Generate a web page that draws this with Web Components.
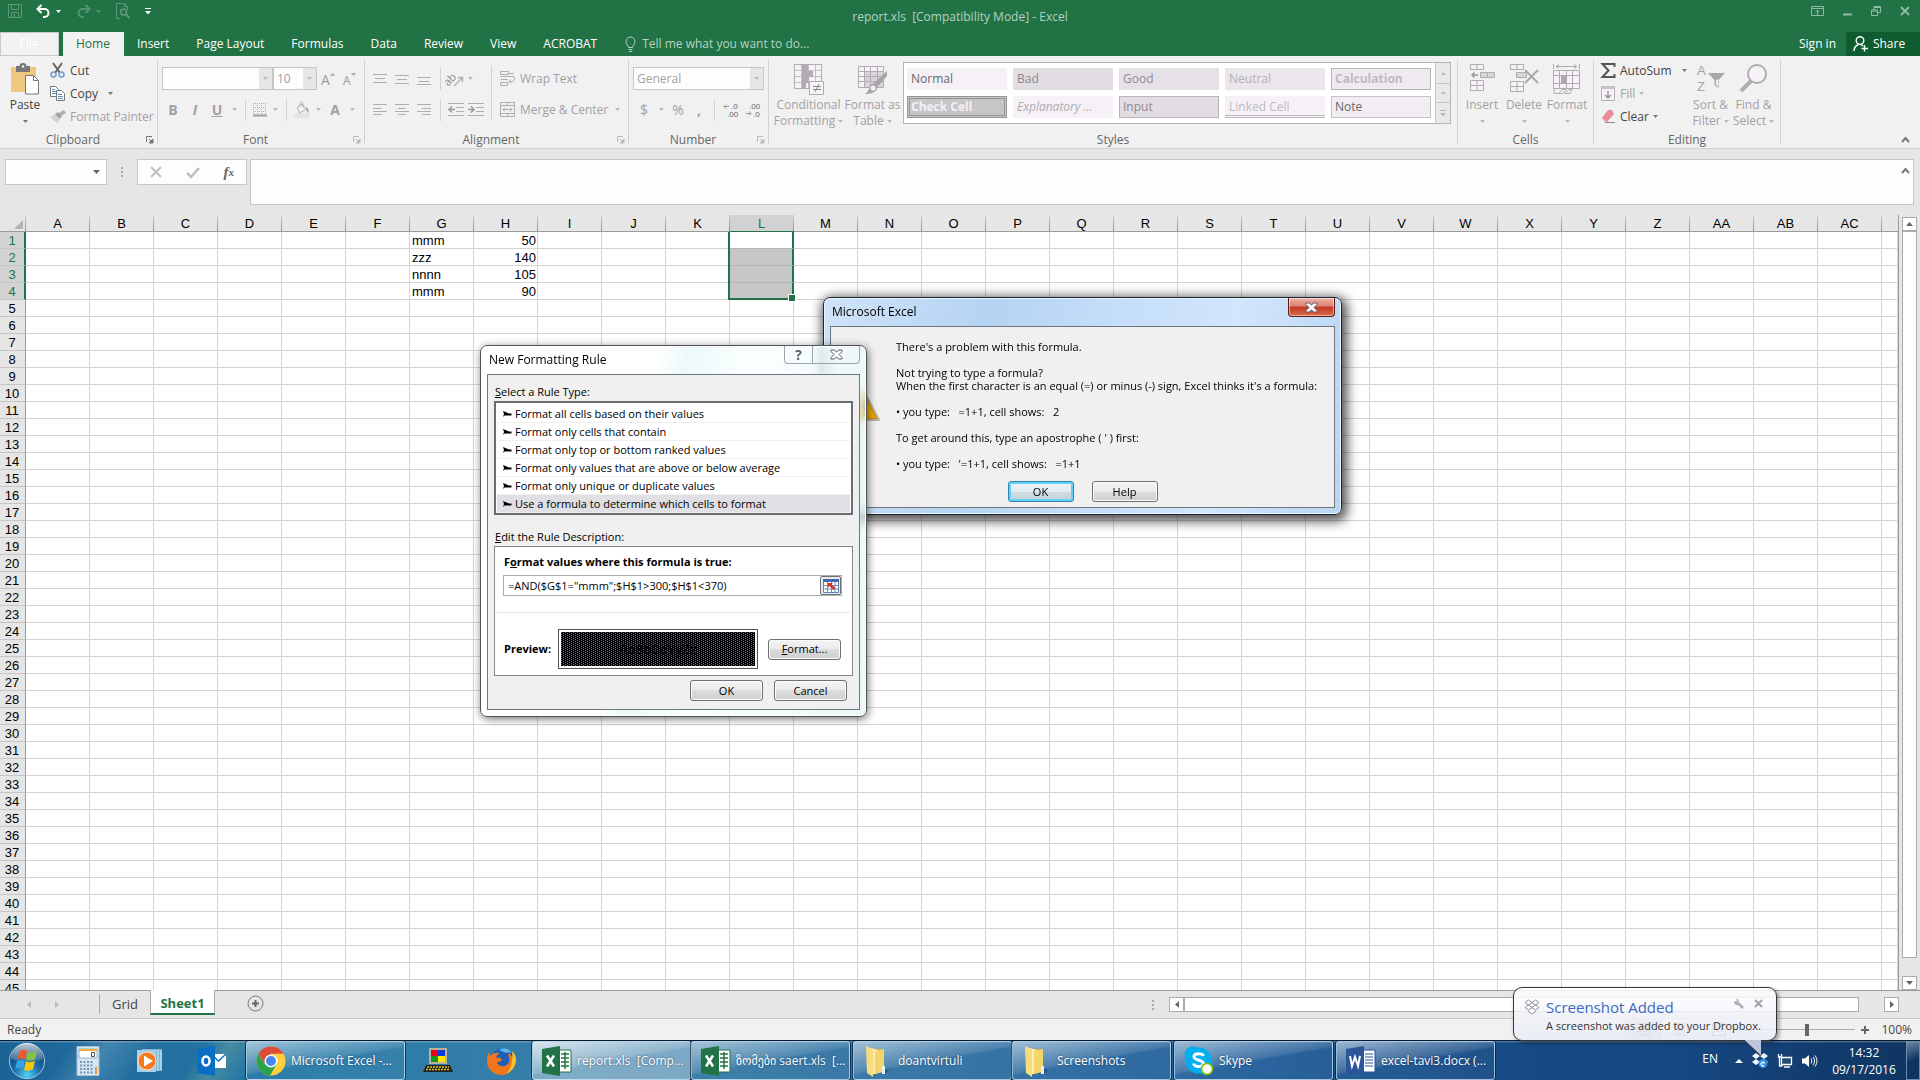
<!DOCTYPE html>
<html lang="en">
<head>
<meta charset="utf-8">
<title>report.xls [Compatibility Mode] - Excel</title>
<style>
  html, body {
    margin: 0;
    height: 100%;
    overflow: hidden;
  }

  body {
    font: 12px/16px "Open Sans", "Noto Sans", "DejaVu Sans", sans-serif;
    color: #444;
    background: #e6e6e6;
  }
</style>
</head>
<body>
<desktop-shell></desktop-shell>

<script>
// ============ ICONS ============
// name: [width, height, svg content]

const G = '#b0acb1';

const ICONS = {
  save: [14, 14, '<path d="M.5.5h13v13H.5zM3.5.5v5h7v-5M3.5 13.5v-5h7v5M6.500 13v-3" fill="none" stroke="#5f9a78"/>'],
  undo: [15, 14, '<path d="M5.500 1 1.500 5l4 4M2 5h6.500a4 4 0 0 1 0 8H7" fill="none" stroke="#fff" stroke-width="2"/>'],
  redo: [15, 14, '<path d="M9.500 1l4 4-4 4M13 5H6.500a4 4 0 0 0 0 8H8" fill="none" stroke="#559471" stroke-width="2"/>'],
  preview: [14, 16, '<path d="M4 15.500H.5V.5h8l3 3V7M8.500.5v3h3" fill="none" stroke="#5f9a78"/><circle cx="7.500" cy="9" r="3" fill="none" stroke="#5f9a78" stroke-width="1.500"/><path d="m9.500 11 4 4" stroke="#5f9a78" stroke-width="2"/>'],
  customize: [6, 7, '<path d="M0 .5h6" stroke="#fff"/><path d="M0 3h6L3 6.500z" fill="#fff"/>'],
  ribbonDisplay: [13, 10, '<path d="M.5.5h12v9H.5zM.5 2.500h12M6.500 9V4M4.500 6l2-2 2 2" fill="none" stroke="#90bba2"/>'],
  minimize: [9, 10, '<path d="M0 8.500h9" stroke="#90bba2" stroke-width="2"/>'],
  restore: [10, 10, '<path d="M.5 4h6v5.500h-6zM.5 5h6M3 3.500V.5h6.500v6H7M3 1.500h6" fill="none" stroke="#90bba2"/>'],
  close: [10, 10, '<path d="m1 1 8 8M9 1 1 9" stroke="#90bba2" stroke-width="2"/>'],
  bulb: [11, 16, '<path d="M3.500 11.500c0-2-2.500-3-2.500-6a4.500 4.500 0 0 1 9 0c0 3-2.500 4-2.500 6z" fill="none" stroke="#b4d2c1"/><path d="M3.500 13.500h4M4 15.500h3" stroke="#b4d2c1"/>'],
  person: [15, 16, '<circle cx="7" cy="4.500" r="3.800" fill="none" stroke="#fff" stroke-width="1.400"/><path d="M1 15c0-3.500 2-5.500 4.500-6.500M8 8.500l2 1.500M11.500 9v6.500M8.500 12.500h6.500" fill="none" stroke="#fff" stroke-width="1.400"/>'],
  down: [5, 3, '<path d="M0 0h5L2.500 3z" fill="#777"/>'],
  downOff: [5, 3, '<path d="M0 0h5L2.500 3z" fill="#bbb"/>'],
  launcher: [8, 8, '<path d="M.5 6V.5H6" fill="none" stroke="#777"/><path d="M3 3l3 3M7 3v4H3z" stroke="#777" fill="#777"/>'],
  launcherOff: [8, 8, '<path d="M.5 6V.5H6" fill="none" stroke="#bbb"/><path d="M3 3l3 3M7 3v4H3z" stroke="#bbb" fill="#bbb"/>'],
  paste: [30, 31, '<path d="M1 3h25v25H1z" fill="#edc87e"/><path d="M6 2h3.500a3.500 3 0 0 1 7 0H20v6H6z" fill="#777"/><circle cx="13" cy="2.500" r="1.300" fill="#f1f1f1"/><path d="M15.500 11.500h8l5 5v13.500h-13z" fill="#fff" stroke="#777"/><path d="M23.500 11.500v5h5" fill="none" stroke="#777"/>'],
  cut: [16, 15, '<path d="M3 0l7 10M12 0 5 10" stroke="#666" stroke-width="2"/><circle cx="3.500" cy="11.500" r="2.500" fill="none" stroke="#6e9fcd" stroke-width="1.500"/><circle cx="11.500" cy="11.500" r="2.500" fill="none" stroke="#6e9fcd" stroke-width="1.500"/>'],
  copy: [16, 15, '<path d="M.5.5h5l3 3v7h-8z" fill="#fff" stroke="#777"/><path d="M2 3.500h3M2 5.500h4M2 7.500h4" stroke="#5b8ec5"/><path d="M6.500 4.500h5l3 3v7h-8z" fill="#fff" stroke="#777"/><path d="M8 8.500h4M8 10.500h5M8 12.500h5" stroke="#5b8ec5"/>'],
  painter: [16, 14, '<path d="M0 7l6-3 4 5-3 4z" fill="#d2ced3"/><path d="M5 4l3-2 4 4-2 3z" fill="#a5a1a6"/><path d="M9 3l5-3 2 3-5 3z" fill="#b0acb1"/>'],
  growFont: [14, 14, '<text x="0" y="13" font-size="14" fill="#a09ca1">A</text><path d="M9 4l2.500-3L14 4z" fill="#aaa"/>'],
  shrinkFont: [14, 14, '<text x="0" y="13" font-size="12" fill="#a09ca1">A</text><path d="M8 1h5l-2.500 3z" fill="#aaa"/>'],
  borders: [14, 14, '<path d="M.5 0v12M4.500 0v12M8.500 0v12M12.500 0v12M0 .5h13M0 4.500h13M0 8.500h13" stroke="#b0acb1" stroke-dasharray="1 1"/><path d="M0 12.500h14" stroke="#a19da2" stroke-width="2"/>'],
  bucket: [16, 16, '<path d="M0 11h16v5H0z" fill="#e9e2ea"/><path d="M3 6l5-4 4 5-6 4z" fill="#f6f2f7" stroke="#b0acb1"/><path d="M6 5V1.500a1.500 1.500 0 0 1 3 0V6" fill="none" stroke="#b0acb1"/><path d="M12 5c3 2 3 4 2 6-1-1-2-3-2-6z" fill="#a5a1a6"/>'],
  alignTop: [14, 12, `<path d="M0 1.500h14M2 5.500h10M0 9.500h14" stroke="${G}"/>`],
  alignMiddle: [14, 12, `<path d="M0 2.500h14M2 6.500h10M0 10.500h14" stroke="${G}"/>`],
  alignBottom: [14, 12, `<path d="M0 4.500h14M2 8.500h10M0 11.500h14" stroke="${G}"/>`],
  alignLeft: [14, 12, `<path d="M0 .5h14M0 4.500h9M0 7.500h14M0 10.500h9" stroke="${G}"/>`],
  alignCenter: [14, 12, `<path d="M0 .5h14M3 4.500h8M0 7.500h14M3 10.500h8" stroke="${G}"/>`],
  alignRight: [14, 12, `<path d="M0 .5h14M5 4.500h9M0 7.500h14M5 10.500h9" stroke="${G}"/>`],
  orient: [17, 16, `<text x="-3" y="10" font-size="11" fill="#888" transform="rotate(-45 6 8)">ab</text><path d="M7 15 15 7M11 6.500h4.500V11" fill="none" stroke="${G}" stroke-width="1.300"/>`],
  outdent: [16, 13, `<path d="M0 .5h16M8 4.500h8M8 8.500h8M0 12.500h16" stroke="${G}"/><path d="M1 6.500h6M4 3.500l-3 3 3 3" fill="none" stroke="#999" stroke-width="1.500"/>`],
  indent: [16, 13, `<path d="M0 .5h16M8 4.500h8M8 8.500h8M0 12.500h16" stroke="${G}"/><path d="M0 6.500h6M3 3.500l3 3-3 3" fill="none" stroke="#999" stroke-width="1.500"/>`],
  wrap: [16, 15, `<path d="M.5.5h8v3h-8zM.5 5.500H14M.5 8.500h7M.5 11.500h7v3h-7zM13.500 5.500c2 2 1 5-2 5H9M11 8.500l-2 2 2 2" fill="none" stroke="${G}"/><path d="M9 2.500h5" stroke="${G}"/>`],
  merge: [16, 15, `<path d="M.5.5h14v14H.5zM.5 3.500h14M.5 11.500h14M7.500.5v3M7.500 11.500v3M3 7.500h9M5 5.500l-2 2 2 2M10 5.500l2 2-2 2" fill="none" stroke="${G}"/>`],
  decInc: [16, 14, '<path d="M6 3.500H1M3 1.500l-2 2 2 2" fill="none" stroke="#999"/><g font-size="8" fill="#666" style="font-family:Liberation Sans"><text x="8" y="6">.0</text><text x="4" y="14">.00</text></g>'],
  decDec: [16, 14, '<path d="M1 10.500h5M4 8.500l2 2-2 2" fill="none" stroke="#999"/><g font-size="8" fill="#666" style="font-family:Liberation Sans"><text x="4" y="6">.00</text><text x="8" y="14">.0</text></g>'],
  condFormat: [30, 31, `<path d="M.5.5h27v24H.5z" fill="#f6f2f7" stroke="${G}"/><path d="M8 1h6v6H8zM8 7h11v6H8zM8 13h7v6H8zM8 19h4v6H8z" fill="#b0acb1"/><path d="M.5 6.500h27M.5 12.500h27M.5 18.500h27M7.500.5v24M14.500.5v24M21.500.5v24" stroke="${G}" opacity=".7"/><path d="M15.500 17.500h14v13h-14z" fill="#f8f5f9" stroke="${G}"/><path d="M19 22.500h8M19 25.500h8M25 20l-4 8" stroke="#888"/>`],
  tableFormat: [30, 31, `<path d="M.5 2.500h25v21H.5z" fill="#f6f2f7" stroke="${G}"/><path d="M7 8h18v15H7z" fill="#d8d4d9"/><path d="M.5 7.500h25M.5 12.500h25M.5 17.500h25M6.500 2.500v21M12.500 2.500v21M19.500 2.500v21" stroke="${G}"/><path d="M29 7v5l-9 10-4-3z" fill="#a7a3a8"/><path d="M15 19c3 0 5 3 4 6-2 4-7 5-12 5 5-3 3-8 8-11z" fill="#aaa6ab"/><circle cx="15" cy="24" r="2.500" fill="#f1f1f1"/>`],
  insertCells: [26, 30, `<path d="M1.500.5h13v5h-13zM8 .5v5M1.500 16.500h13v10h-13zM8 16.500v10M1.500 21.500h13" fill="#f6f2f7" stroke="${G}"/><path d="M11.500 8.500h14v5h-14zM18.500 8.500v5" fill="#d8d4d9" stroke="${G}"/><path d="M9 11H3M5.500 8.500 3 11l2.500 2.500" fill="none" stroke="#999" stroke-width="1.500"/>`],
  deleteCells: [30, 30, `<path d="M1.500.5h13v5h-13zM8 .5v5M1.500 17.500h13v10h-13zM8 17.500v10M1.500 22.500h13" fill="#f6f2f7" stroke="${G}"/><path d="M7.500 8.500h10v5h-10z" fill="#d8d4d9" stroke="${G}"/><path d="m16 6 13 13M29 6 16 19" stroke="#aaa" stroke-width="2"/>`],
  formatCells: [30, 32, `<path d="M1.500 0v5M27.500 0v5M4 2.500h21M7 .5l-3 2 3 2M22 .5l3 2-3 2" fill="none" stroke="${G}"/><path d="M1.500 6.500h26v18h-26z" fill="#f6f2f7" stroke="${G}"/><path d="M1.500 11.500h26M1.500 19.500h26M7.500 6.500v18M14.500 6.500v18M20.500 6.500v18" stroke="${G}"/><path d="M9 12h6v8H9z" fill="#aaa"/><path d="M2 25v4.500h5l3-4h4l-3 4h-4M13 29.500l4-4h3l-2 4z" fill="none" stroke="${G}"/>`],
  sigma: [15, 15, '<path d="M13.500 4V1H1.500l6 6.500-6 6.500h12v-3" fill="none" stroke="#555" stroke-width="2"/>'],
  fill: [15, 15, `<path d="M.5.5h13v14H.5z" fill="#f6f2f7" stroke="${G}"/><path d="M0 0h14v3H0z" fill="#c5c1c6"/><path d="M7 5v7M4 9l3 3 3-3" fill="none" stroke="#999" stroke-width="1.500"/>`],
  eraser: [15, 14, '<path d="M7 0h4l2 4-7 8H3L1 8z" fill="#e98b9b"/><path d="M1 8l5 4H3z" fill="#f5c9d0"/><path d="M4 12.500h10" stroke="#888"/>'],
  sort: [30, 30, '<g font-size="13" fill="#a5a1a6" style="font-family:Liberation Sans"><text x="1" y="11">A</text><text x="1" y="27">Z</text></g><path d="M12 9h17l-6.500 7v8l-4-3v-5z" fill="#aaa6ab"/><path d="M20 16v5l2 1v-7z" fill="#eee"/>'],
  find: [30, 30, '<circle cx="18" cy="10" r="9" fill="#f6f2f7" stroke="#b0acb1" stroke-width="2"/><path d="M12 17 2 27" stroke="#b0acb1" stroke-width="4"/>'],
  chevronUp: [9, 6, '<path d="M1 5l3.500-4L8 5" fill="none" stroke="#777" stroke-width="2"/>'],
  cancel: [12, 10, '<path d="m1 0 10 10M11 0 1 10" stroke="#c0c0c0" stroke-width="2"/>'],
  check: [14, 11, '<path d="M1 6l4 4 8-9" fill="none" stroke="#c0c0c0" stroke-width="2.500"/>'],
  up: [7, 4, '<path d="M0 4h7L3.500 0z" fill="#666"/>'],
  downBig: [7, 4, '<path d="M0 0h7L3.500 4z" fill="#666"/>'],
  left: [4, 7, '<path d="M4 0v7L0 3.500z" fill="#666"/>'],
  right: [4, 7, '<path d="M0 0v7l4-3.500z" fill="#666"/>'],
  leftOff: [4, 7, '<path d="M4 0v7L0 3.500z" fill="#bcbcbc"/>'],
  rightOff: [4, 7, '<path d="M0 0v7l4-3.500z" fill="#bcbcbc"/>'],
  plusCircle: [17, 17, '<circle cx="8.500" cy="8.500" r="7.500" fill="none" stroke="#777"/><path d="M8.500 5v7M5 8.500h7" stroke="#666" stroke-width="2"/>'],
  viewNormal: [14, 13, '<path d="M.5.5h13v12H.5zM.5 4.500h13M.5 8.500h13M5 .5v12M9.500.5v12" fill="none" stroke="#777"/>'],
  viewLayout: [14, 13, '<path d="M.5.5h13v12H.5zM3.500 2.500h7v8h-7zM5 5h4M5 7.500h4" fill="none" stroke="#777"/>'],
  viewBreak: [14, 13, '<path d="M.5.5h13v12H.5zM4.500.5v8h5v-8" fill="none" stroke="#777"/>'],
  bullet: [9, 6, '<path d="M0 0 6 2.500h2.500v2H1.500L0 6 1 3z" fill="#000"/>'],
  rangePick: [16, 14, '<path d="M.5.5h15v13H.5z" fill="#fff" stroke="#5d7fb0"/><path d="M0 0h16v3H0z" fill="#3e69b0"/><path d="M.5 6.500h15M.5 10h15M4.500 3v11M8.500 3v11M12 3v11" stroke="#6d8fc4"/><path d="M5 4h5l-1.500 1.500 4 3.500-2 2-4-4L5 8.500z" fill="#d8301c"/>'],
  warning: [32, 32, '<path d="M16 2 31 31H1z" fill="#f5b400" stroke="#b7b0a0" stroke-linejoin="round" stroke-width="2"/><path d="M16 5 28.500 29.500h-25z" fill="#ecaa00" stroke="#c98a00"/><path d="M15 12h3v10h-3zM15 24h3v3h-3z" fill="#222"/>'],
  glassClose: [13, 11, '<path d="M1 1h3.500l2 2.200L8.500 1H12v1.500L9 5.500l3 3V10H8.500l-2-2.200L4.500 10H1V8.500l3-3-3-3z" fill="#fff" stroke="#555b6d"/>'],
  orb: [38, 38, '<defs><radialGradient id="o" cx=".5" cy=".9" r=".8"><stop offset="0" stop-color="#4fd2f5"/><stop offset=".45" stop-color="#1d6fae"/><stop offset="1" stop-color="#0f3f6f"/></radialGradient><linearGradient id="h" x2="0" y2="1"><stop offset="0" stop-color="#fff" stop-opacity=".75"/><stop offset="1" stop-color="#fff" stop-opacity=".1"/></linearGradient></defs><circle cx="19" cy="19" r="17.500" fill="url(#o)" stroke="#a9cbe0"/><path d="M3 17a16 16 0 0 1 32 0c-9 4-22 4-32 0z" fill="url(#h)"/><path d="M12 9c3-2 5-1 7 0l-2 8c-3-1-5-1-8 0z" fill="#ef5a28"/><path d="M20 10c3 1 6 1 9-1l-2 8c-3 2-6 2-9 0z" fill="#86c440"/><path d="M9 19c3-1 5-1 8 0l-2 8c-3-2-5-1-8 0z" fill="#37a3e6"/><path d="M18 19c3 2 6 1 9 0l-2 8c-3 2-6 2-9 1z" fill="#fdc60b"/>'],
  calc: [24, 30, '<path d="M1 .5h22v29H1z" fill="#d6e8f4" stroke="#a3c1d6"/><path d="M3 3h18v9H3z" fill="#fff" stroke="#8fb3cb"/><path d="M3 3h18v2H3z" fill="#f3ad3f"/><path d="M15.500 6.500h3v4h-3z" fill="none" stroke="#456"/><path d="M4 16h14M4 19.500h14M4 23h14M4 26.500h14" stroke="#6f97b5" stroke-width="2" stroke-dasharray="2 1.500"/><path d="M19 21h2v7h-2z" fill="#f0952b"/>'],
  media: [28, 26, '<path d="M6 1h20v22H6z" fill="#7fb5d5"/><path d="M1 2h19v22H1z" fill="#a8cfe6"/><path d="M22 2v21M25 3v19" stroke="#d7eaf5"/><circle cx="11" cy="13" r="9" fill="#f4791f" stroke="#fde1c5"/><path d="M8 7.500 17 13l-9 5.500z" fill="#fff"/>'],
  outlook: [30, 30, '<path d="M14 8h15v14H14z" fill="#fff"/><path d="M14 8l7.500 7L29 8M14 22V9" fill="none" stroke="#0c6fc7" stroke-width="1.500"/><path d="M0 3 18 0v30L0 27z" fill="#0b6ec6"/><ellipse cx="9" cy="15" rx="3.500" ry="4.500" fill="none" stroke="#fff" stroke-width="2.500"/>'],
  chrome: [30, 30, '<circle cx="15" cy="15" r="14.500" fill="#fdd13b"/><path d="M2.400 7.700A14.500 14.500 0 0 1 27.600 7.800H15L9 18z" fill="#de4b3c"/><path d="M2.400 7.700A14.500 14.500 0 0 0 14 29.500l6.500-11H9z" fill="#2ba24c"/><circle cx="15" cy="15" r="6.500" fill="#fff"/><circle cx="15" cy="15" r="5" fill="#4687f1"/>'],
  laptop: [30, 26, '<path d="M6 0h18v16H6z" fill="#b9b29a"/><path d="M8 2h7v6H8z" fill="#e8001c"/><path d="M15 2h7v6h-7z" fill="#0a3be0"/><path d="M8 8h7v6H8z" fill="#109c18"/><path d="M15 8h7v6h-7z" fill="#ffe600"/><path d="M3 17h24l3 7H0z" fill="#222"/><path d="M4 19h22M3 21.500h24" stroke="#e6c21c" stroke-width="1.500" stroke-dasharray="2 1"/>'],
  firefox: [30, 30, '<circle cx="16" cy="14" r="12" fill="#1d5fb4"/><path d="M12 4c4-3 10-2 13 3-4-1-6 0-6 0s-4-2-7-3z" fill="#58b6ea"/><path d="M2 6c0 2 .5 3 1.500 4C5 8 8 6 12 7c-1 2-3 3-3 5 3-1 5 0 6 2-1 2-4 1-5 3 3 5 10 4 12-1 1-4-1-7-1-9 4 2 6 6 6 10-1 7-6 12-13 12S0 23 0 16C0 12 0 9 2 6z" fill="#f0761b"/><path d="M25 5c4 4 5 9 3 14-2 5-5 7-9 9 6-6 7-14 6-23z" fill="#fbc02d"/>'],
  excel: [30, 30, '<path d="M17 4h12v22H17z" fill="#fff" stroke="#217346"/><path d="M19 8h8M19 12h8M19 16h8M19 20h8M23 6v17" stroke="#217346" stroke-width="1.500"/><path d="M0 3 18 0v30L0 27z" fill="#217346"/><path d="m5 9.500 7 11M12 9.500l-7 11" stroke="#fff" stroke-width="2.500"/>'],
  word: [30, 30, '<path d="M17 4h12v22H17z" fill="#fff" stroke="#2a5699"/><path d="M19 8h8M19 11h8M19 14h8M19 17h8M19 20h8" stroke="#2a5699"/><path d="M0 3 18 0v30L0 27z" fill="#2a5699"/><path d="M4 10l2 10 3-9 3 9 2-10" fill="none" stroke="#fff" stroke-width="2"/>'],
  folder: [30, 30, '<path d="M6 26 22 28l4-4-8-2z" fill="#1b3b5c" opacity=".5"/><path d="M10 3h9v23h-9z" fill="#d8a83c"/><path d="M8 2l7 2v23l-7 2z" fill="#f9edb0"/><path d="M3 0l7 3v28l-6-4z" fill="#f6dc7c"/><path d="M12 5l9-2v23l-9 2z" fill="#f4d56b"/><path d="M19 20h3v8h-3z" fill="#dff0fb"/>'],
  skype: [30, 30, '<circle cx="9" cy="9" r="8.500" fill="#00aff0"/><circle cx="14.500" cy="14.500" r="13" fill="#00aff0"/><circle cx="20" cy="20" r="8.500" fill="#00aff0"/><path d="M19.500 10c-1-3-9-3.500-9.500.5-.5 4.500 10 3 9.500 7.500-.5 3.500-9 3.500-10-.5" fill="none" stroke="#fff" stroke-width="3"/><circle cx="23" cy="23" r="5.500" fill="#fff" stroke="#7fba00" stroke-width="1.500"/>'],
  trayUp: [8, 4, '<path d="M0 4h8L4 0z" fill="#fff"/>'],
  dropboxTray: [16, 15, '<path d="M4 0l4 3-4 3-4-3zM12 0l4 3-4 3-4-3zM4 6l4 3-4 3-4-3zM12 6l4 3-4 3-4-3z" fill="#f2f6fa"/><circle cx="11" cy="10.500" r="4.500" fill="#2d8fdb"/><path d="M9 10h4M9 12.500h3M13 10a2.200 2.200 0 1 0-1 3" stroke="#fff" fill="none"/>'],
  network: [16, 15, '<path d="M4.500 4.500h10v7h-10zM7 14h6M1.500 1v3h3M2.500 4v9h3M4.500 1v3" fill="#244c74" stroke="#fff" stroke-width="1.300"/>'],
  speaker: [15, 14, '<path d="M0 4.500h3L7 1v12L3 9.500H0z" fill="#fff"/><path d="M9 4.500c1 1.500 1 3.500 0 5M11 3c2 2.500 2 5.500 0 8M13 1.500c2.500 3.500 2.500 7.500 0 11" fill="none" stroke="#fff"/>'],
  dropbox: [16, 16, '<path d="M4.500 1 8 3.500 4.500 6 1 3.500zM11.500 1 15 3.500 11.500 6 8 3.500zM4.500 6 8 8.500 4.500 11 1 8.500zM11.500 6 15 8.500 11.500 11 8 8.500zM4 12l4 3 4-3" fill="#fff" stroke="#8b8f96"/>'],
  wrench: [11, 11, '<path d="M1 3.500a2.500 2.500 0 0 0 3.500 2L9 10" fill="none" stroke="#a9acb2" stroke-width="2.500"/><path d="M3 1l1 2-2 1" fill="none" stroke="#a9acb2" stroke-width="1.500"/>'],
  balloonClose: [9, 9, '<path d="m1 1 7 7M8 1 1 8" stroke="#a0a3a9" stroke-width="2"/>']
};

// ============ BASE ============

const BASE_CSS = `
  * { box-sizing: border-box; }
  button, input, select, textarea {
    margin: 0;
    padding: 0;
    border: 0;
    border-radius: 0;
    background: none;
    font: inherit;
    color: inherit;
    outline: none;
    appearance: none;
  }
  button {
    display: inline-flex;
    align-items: center;
    justify-content: center;
    white-space: nowrap;
  }
`;

class BaseElement extends HTMLElement {
  constructor() {
    super();
    this.attachShadow({ mode: 'open' });
  }

  connectedCallback() {
    this.shadowRoot.innerHTML = `
      <style>${BASE_CSS}${this._getStyles()}</style>
      ${this._getTemplate()}
    `;
  }

  _getStyles() {
    return ':host { display: block; }';
  }

  _getTemplate() {
    return '<slot></slot>';
  }
}

const icon = name => `<ui-icon name="${name}"></ui-icon>`;

class UiIcon extends BaseElement {
  _getStyles() {
    return `
      :host { display: inline-flex; flex: none; }
      svg { display: block; overflow: visible; }
      text { font-family: "Open Sans", sans-serif; }
      g text { font-family: inherit; }
    `;
  }

  _getTemplate() {
    const [width, height, content] = ICONS[this.getAttribute('name')];
    return `<svg width="${width}" height="${height}" viewBox="0 0 ${width} ${height}" aria-hidden="true">${content}</svg>`;
  }
}

// ============ TITLE BAR + TABS ============

class ExcelTitleBar extends BaseElement {
  _getStyles() {
    return `
      :host {
        display: grid;
        grid-template-columns: 1fr auto 1fr;
        height: 32px;
        background: #217346;
        color: #b4d2c1;
      }
      .quick, .window { display: flex; align-items: center; height: 22px; }
      .quick { padding-left: 8px; }
      .quick button:nth-child(1) { width: 14px; margin-right: 14px; }
      .quick button:nth-child(2), .quick button:nth-child(3) { gap: 5px; margin-right: 15px; }
      .quick button:nth-child(4) { margin-right: 15px; }
      h1 { margin: 9px 0 0; font: inherit; line-height: 16px; white-space: pre; }
      .window { justify-content: flex-end; gap: 19px; padding-right: 10px; }
    `;
  }

  _getTemplate() {
    return `
      <div class="quick">
        <button aria-label="Save">${icon('save')}</button>
        <button aria-label="Undo">${icon('undo')}<svg width="5" height="3"><path d="M0 0h5L2.500 3z" fill="#fff"/></svg></button>
        <button aria-label="Redo">${icon('redo')}<svg width="5" height="3"><path d="M0 0h5L2.500 3z" fill="#559471"/></svg></button>
        <button aria-label="Print Preview">${icon('preview')}</button>
        <button aria-label="Customize">${icon('customize')}</button>
      </div>
      <h1>report.xls  [Compatibility Mode] - Excel</h1>
      <div class="window">
        <button aria-label="Ribbon Display Options">${icon('ribbonDisplay')}</button>
        <button aria-label="Minimize">${icon('minimize')}</button>
        <button aria-label="Restore">${icon('restore')}</button>
        <button aria-label="Close">${icon('close')}</button>
      </div>
    `;
  }
}

class ExcelTabs extends BaseElement {
  _getStyles() {
    return `
      :host {
        display: flex;
        height: 24px;
        background: #217346;
        color: #fff;
      }
      button { padding: 0 14px 0 13px; }
      .file {
        width: 59px;
        margin-right: 4px;
        background: #f1f1f1;
        border: 1px solid #c8c8c8;
      }
      .active { background: #f1f1f1; color: #217346; }
      .tell { gap: 6px; padding: 0 14px; color: #b4d2c1; }
      .account { display: flex; margin-left: auto; }
      .account button { padding: 0 10px; }
      .account .share { width: 74px; gap: 5px; padding: 0 15px 0 7px; background: #0e5c2f; }
    `;
  }

  _getTemplate() {
    const tabs = ['Insert', 'Page Layout', 'Formulas', 'Data', 'Review', 'View', 'ACROBAT'];
    return `
      <button class="file">File</button>
      <button class="active">Home</button>
      ${tabs.map(tab => `<button>${tab}</button>`).join('')}
      <button class="tell">${icon('bulb')}Tell me what you want to do...</button>
      <div class="account">
        <button>Sign in</button>
        <button class="share">${icon('person')}Share</button>
      </div>
    `;
  }
}

// ============ RIBBON ============

class RibbonGroup extends BaseElement {
  _getStyles() {
    return `
      :host {
        display: flex;
        flex-direction: column;
        height: 84px;
        border-right: 1px solid #d2d2d2;
      }
      .content { display: flex; flex: none; height: 72px; }
      footer {
        display: flex;
        flex: none;
        align-items: center;
        height: 16px;
        color: #666;
      }
      span { flex: 1; text-align: center; }
      footer button { margin-right: 3px; }
    `;
  }

  _getTemplate() {
    const launcher = this.getAttribute('launcher');
    return `
      <div class="content"><slot></slot></div>
      <footer>
        <span>${this.getAttribute('label')}</span>
        ${launcher ? `<button aria-label="${this.getAttribute('label')} settings">${icon(launcher)}</button>` : ''}
      </footer>
    `;
  }
}

class ExcelRibbon extends BaseElement {
  _getStyles() {
    return `
      :host {
        display: flex;
        height: 93px;
        padding-top: 4px;
        background: #f1f1f1;
        border-bottom: 1px solid #d2d2d2;
        color: #a3a0a4;
      }
      .on { color: #444; }
      .big { flex-direction: column; justify-content: flex-start; height: 72px; padding-top: 4px; line-height: 16px; }
      .big > ui-icon { height: 32px; margin-bottom: 1px; }
      .big span { display: flex; align-items: center; gap: 3px; height: 16px; }
      .stack { display: flex; flex-direction: column; align-items: flex-start; margin-top: -1px; }
      .stack button { height: 23px; gap: 4px; }
      .stack .far { gap: 10px; }
      .stack .far span { display: flex; gap: 4px; }
      .rows { display: flex; flex-direction: column; gap: 8px; padding-top: 7px; }
      .row { display: flex; align-items: center; height: 23px; }
      .row button { height: 22px; }
      .row .labelled { gap: 4px; margin-right: 3px; }
      .c10 { width: 12px; } .c18 { width: 18px; } .c20 { width: 20px; } .c22 { width: 22px; }
      .sep { width: 1px; height: 22px; margin: 0 5px; background: #d2d2d2; }
      .sep.tall { height: 54px; margin: 6px 8px 0 5px; }
      .glyph { font-size: 14px; }
      .combo { display: flex; position: relative; }
      .combo select {
        width: 100%;
        height: 23px;
        padding: 0 3px;
        border: 1px solid #c6c6c6;
        background: #fdfdfd;
      }
      .combo ui-icon {
        position: absolute;
        right: 1px;
        top: 1px;
        width: 13px;
        height: 21px;
        align-items: center;
        justify-content: center;
        background: #e6e6e6;
        pointer-events: none;
      }
      .clipboard { width: 158px; } .fonts { width: 207px; } .align { width: 264px; }
      .number { width: 140px; } .styles { width: 689px; } .cells { width: 136px; } .editing { width: 187px; }
      .gallery {
        display: flex;
        width: 548px;
        height: 62px;
        margin: 2px 0 0 2px;
        border: 1px solid #b5b5b5;
        background: #fff;
      }
      .swatches {
        flex: 1;
        display: grid;
        grid-template-columns: repeat(5, 100px);
        grid-auto-rows: 22px;
        gap: 6px;
        padding: 5px 0 0 3px;
      }
      .swatches button { justify-content: flex-start; padding: 0 4px; background: #f6f1f7; }
      .swatches .bad, .swatches .input { background: #e2dde2; color: #8d8a8e; }
      .swatches .good { background: #e6e1e6; color: #908c91; }
      .swatches .neutral { background: #ebe6eb; color: #b3b0b4; }
      .swatches .calc { background: #efeaf0; border: 1px solid #b5b5b5; padding: 0 3px; font-weight: bold; color: #bdbabe; }
      .swatches .check { background: #c8c5c9; border: 3px double #969396; padding: 0 1px; font-weight: bold; color: #f3f0f4; }
      .swatches .explain { font-style: italic; color: #aeabaf; }
      .swatches .input { border: 1px solid #b5b5b5; padding: 0 3px; }
      .swatches .linked { border-bottom: 3px double #bdbabe; padding-top: 3px; color: #bdbabe; }
      .swatches .note { background: #f2edf2; border: 1px solid #c6c3c7; padding: 0 3px; color: #666; }
      .swatches .normal { color: #666; }
      .scroll { display: grid; grid-template-rows: 1fr 19px 21px; width: 15px; background: #e9e9e9; border-left: 1px solid #c6c6c6; }
      .scroll button + button { border-top: 1px solid #c6c6c6; }
      .collapse { align-self: flex-end; margin: 0 10px 5px auto; }
    `;
  }

  _big(name, lines, width, on = '') {
    return `<button class="big ${on}" style="width:${width}px">${icon(name)}${lines.map(l => `<span>${l}</span>`).join('')}</button>`;
  }

  _cell(name, size = 22) {
    return `<button class="c${size}" aria-label="${name}">${icon(name)}</button>`;
  }

  _getTemplate() {
    const arrow = icon('downOff');
    const drop = `<button class="c10" aria-label="More">${arrow}</button>`;
    const sep = '<i class="sep"></i>';
    return `
      <ribbon-group class="clipboard" label="Clipboard" launcher="launcher">
        ${this._big('paste', ['Paste', icon('down')], 50, 'on')}
        <div class="stack">
          <button class="on">${icon('cut')}Cut</button>
          <button class="on far"><span>${icon('copy')}Copy</span>${icon('down')}</button>
          <button>${icon('painter')}Format Painter</button>
        </div>
      </ribbon-group>

      <ribbon-group class="fonts" label="Font" launcher="launcherOff">
        <div class="rows" style="padding-left:4px">
          <div class="row">
            <div class="combo" style="width:111px"><select aria-label="Font"><option></option></select>${arrow}</div>
            <div class="combo" style="width:44px"><select aria-label="Font Size"><option>10</option></select>${arrow}</div>
            <button class="c22" aria-label="Increase Font Size">${icon('growFont')}</button>
            <button class="c22" aria-label="Decrease Font Size">${icon('shrinkFont')}</button>
          </div>
          <div class="row">
            <button class="c22 glyph"><b>B</b></button>
            <button class="c22 glyph"><b><i>I</i></b></button>
            <button class="c22 glyph"><b><u>U</u></b></button>
            ${drop}${sep}${this._cell('borders', 18)}${drop}${sep}${this._cell('bucket', 20)}${drop}
            <button class="c22 glyph"><b>A</b></button>${drop}
          </div>
        </div>
      </ribbon-group>

      <ribbon-group class="align" label="Alignment" launcher="launcherOff">
        <div class="rows" style="padding-left:4px">
          <div class="row">${this._cell('alignTop')}${this._cell('alignMiddle')}${this._cell('alignBottom')}${sep}${this._cell('orient', 18)}${drop}</div>
          <div class="row">${this._cell('alignLeft')}${this._cell('alignCenter')}${this._cell('alignRight')}${sep}${this._cell('outdent', 20)}${this._cell('indent', 20)}</div>
        </div>
        <i class="sep tall"></i>
        <div class="rows">
          <div class="row"><button class="labelled">${icon('wrap')}Wrap Text</button></div>
          <div class="row"><button class="labelled">${icon('merge')}Merge &amp; Center</button>${drop}</div>
        </div>
      </ribbon-group>

      <ribbon-group class="number" label="Number" launcher="launcherOff">
        <div class="rows" style="padding-left:4px">
          <div class="row"><div class="combo" style="width:131px"><select aria-label="Number Format"><option>General</option></select>${arrow}</div></div>
          <div class="row">
            <button class="c22 glyph">$</button>${drop}
            <button class="c22 glyph">%</button>
            <button class="c20 glyph"><b>,</b></button>${sep}${this._cell('decInc')}${this._cell('decDec')}
          </div>
        </div>
      </ribbon-group>

      <ribbon-group class="styles" label="Styles">
        <div style="padding-left:4px;display:flex">
          ${this._big('condFormat', ['Conditional', 'Formatting' + arrow], 71)}
          ${this._big('tableFormat', ['Format as', 'Table' + arrow], 57)}
        </div>
        <div class="gallery">
          <div class="swatches">
            <button class="normal">Normal</button>
            <button class="bad">Bad</button>
            <button class="good">Good</button>
            <button class="neutral">Neutral</button>
            <button class="calc">Calculation</button>
            <button class="check">Check Cell</button>
            <button class="explain">Explanatory ...</button>
            <button class="input">Input</button>
            <button class="linked">Linked Cell</button>
            <button class="note">Note</button>
          </div>
          <div class="scroll">
            <button aria-label="Previous styles"><svg width="5" height="3"><path d="M0 3h5L2.500 0z" fill="#bbb"/></svg></button>
            <button aria-label="Next styles">${arrow}</button>
            <button aria-label="All styles"><svg width="6" height="7"><path d="M0 .5h6" stroke="#bbb"/><path d="M0 3h6L3 6.500z" fill="#bbb"/></svg></button>
          </div>
        </div>
      </ribbon-group>

      <ribbon-group class="cells" label="Cells">
        <div style="padding-left:4px;display:flex">
          ${this._big('insertCells', ['Insert', arrow], 40)}
          ${this._big('deleteCells', ['Delete', arrow], 44)}
          ${this._big('formatCells', ['Format', arrow], 42)}
        </div>
      </ribbon-group>

      <ribbon-group class="editing" label="Editing">
        <div class="stack" style="width:95px;padding-left:7px">
          <button class="on far"><span>${icon('sigma')}AutoSum</span>${icon('down')}</button>
          <button>${icon('fill')}Fill${arrow}</button>
          <button class="on">${icon('eraser')}Clear${icon('down')}</button>
        </div>
        ${this._big('sort', ['Sort &amp;', 'Filter' + arrow], 43)}
        ${this._big('find', ['Find &amp;', 'Select' + arrow], 43)}
      </ribbon-group>

      <button class="collapse" aria-label="Collapse the Ribbon">${icon('chevronUp')}</button>
    `;
  }
}

// ============ FORMULA BAR ============

class FormulaBar extends BaseElement {
  _getStyles() {
    return `
      :host { display: flex; align-items: flex-start; padding: 10px 6px 10px 5px; background: #e6e6e6; }
      .name, .actions, .formula { background: #fdfdfd; border: 1px solid #c6c6c6; }
      .name { display: flex; align-items: center; width: 102px; height: 26px; padding-right: 6px; }
      .name input { flex: 1; width: 0; height: 24px; }
      .dots { width: 30px; height: 26px; display: grid; place-items: center; }
      .actions { display: flex; justify-content: space-around; width: 110px; height: 26px; margin-right: 3px; }
      .fx { font: italic bold 15px "Liberation Serif", serif; color: #666; }
      .fx sub { font-size: 11px; line-height: 0; }
      .formula { flex: 1; display: flex; height: 46px; padding-right: 3px; }
      textarea { flex: 1; resize: none; }
      .formula ui-icon { margin-top: 8px; }
    `;
  }

  _getTemplate() {
    return `
      <div class="name"><input aria-label="Name Box">${icon('downBig')}</div>
      <div class="dots"><svg width="2" height="11"><path d="M1 0v11" stroke="#aaa" stroke-width="2" stroke-dasharray="2 2"/></svg></div>
      <div class="actions">
        <button aria-label="Cancel">${icon('cancel')}</button>
        <button aria-label="Enter">${icon('check')}</button>
        <button class="fx">f<sub>x</sub></button>
      </div>
      <div class="formula"><textarea aria-label="Formula Bar"></textarea>${icon('chevronUp')}</div>
    `;
  }
}

// ============ SHEET ============

const ROW_COUNT = 45;
const COLUMNS = [...'ABCDEFGHIJKLMNOPQRSTUVWXYZ', 'AA', 'AB', 'AC'];
const CELLS = {
  G1: 'mmm', H1: 50,
  G2: 'zzz', H2: 140,
  G3: 'nnnn', H3: 105,
  G4: 'mmm', H4: 90
};

class SheetGrid extends BaseElement {
  _getStyles() {
    return `
      :host { flex: 1; min-height: 0; display: flex; background: #e6e6e6; }
      .view { flex: 1; overflow: hidden; border-right: 1px solid #9b9b9b; }
      table {
        width: 100%;
        table-layout: fixed;
        border-collapse: separate;
        border-spacing: 0;
        font: 13px/15px "Liberation Sans", Arial, sans-serif;
        color: #000;
      }
      .head { width: 26px; }
      .col { width: 64px; }
      th { padding: 0; font-weight: normal; }
      thead th {
        height: 17px;
        padding-right: 1px;
        border-bottom: 1px solid #9b9b9b;
        background: linear-gradient(#d0d0d0, #8f8f8f) right / 1px 100% no-repeat #e6e6e6;
      }
      thead th:last-child { background: #e6e6e6; }
      tbody th {
        height: 17px;
        padding: 1px 1px 0 0;
        border-right: 1px solid #9b9b9b;
        border-bottom: 1px solid #c6c6c6;
        background: #e6e6e6;
      }
      td {
        height: 17px;
        padding: 1px 1px 0 2px;
        border-right: 1px solid #d4d4d4;
        border-bottom: 1px solid #d4d4d4;
        background: #fff;
      }
      td.num { text-align: right; }
      thead th.sel { background-color: #d2d2d2; color: #217346; }
      tbody th.sel { background: #d2d2d2; color: #217346; padding-right: 0; border-right: 2px solid #217346; }
      td.sel { position: relative; background: #c6c6c6; border-right: 2px solid #217346; border-bottom-color: #b4b4b4; box-shadow: -2px 0 #217346; }
      td.sel.first { background: #fff; box-shadow: -2px 0 #217346, 0 -1px #217346; }
      td.sel.last { border-bottom: 2px solid #217346; }
      td.sel.last::after {
        content: "";
        position: absolute;
        right: -4px;
        bottom: -4px;
        width: 6px;
        height: 6px;
        border: 1px solid #fff;
        background: #217346;
      }
      .scroll { display: flex; flex-direction: column; align-items: center; width: 21px; padding-top: 2px; }
      .scroll button { width: 15px; height: 14px; border: 1px solid #ababab; background: #fff; }
      .thumb { flex: 1; width: 15px; margin-bottom: 18px; border: 1px solid #ababab; background: #fff; }
      .corner { display: block; margin: 4px 2px 2px auto; }
    `;
  }

  _cellHtml(col, row) {
    const value = CELLS[col + row] ?? '';
    const classes = [];
    if (typeof value === 'number') classes.push('num');
    if (col === 'L' && row <= 4) classes.push('sel');
    if (col === 'L' && row === 1) classes.push('first');
    if (col === 'L' && row === 4) classes.push('last');
    return `<td class="${classes.join(' ')}">${value}</td>`;
  }

  _getTemplate() {
    const rows = Array.from({ length: ROW_COUNT }, (_, i) => i + 1);
    return `
      <div class="view">
        <table>
          <colgroup><col class="head">${'<col class="col">'.repeat(COLUMNS.length)}<col></colgroup>
          <thead>
            <tr>
              <th><svg class="corner" width="9" height="9"><path d="M9 0v9H0z" fill="#b4b4b4"/></svg></th>
              ${COLUMNS.map(c => `<th scope="col" class="${c === 'L' ? 'sel' : ''}">${c}</th>`).join('')}
              <th></th>
            </tr>
          </thead>
          <tbody>
            ${rows.map(r => `<tr><th scope="row" class="${r <= 4 ? 'sel' : ''}">${r}</th>${COLUMNS.map(c => this._cellHtml(c, r)).join('')}<td></td></tr>`).join('')}
          </tbody>
        </table>
      </div>
      <div class="scroll">
        <button aria-label="Scroll up">${icon('up')}</button>
        <div class="thumb"></div>
        <button aria-label="Scroll down">${icon('downBig')}</button>
      </div>
    `;
  }
}

class SheetTabs extends BaseElement {
  _getStyles() {
    return `
      :host {
        display: flex;
        align-items: flex-start;
        height: 29px;
        border-top: 1px solid #9b9b9b;
        border-bottom: 1px solid #c6c6c6;
        background: #e6e6e6;
        font-size: 13px;
      }
      .nav { display: flex; align-items: center; gap: 24px; width: 100px; height: 20px; margin-top: 3px; padding-left: 27px; border-right: 1px solid #ababab; }
      .tab { height: 25px; width: 50px; }
      .active {
        width: 65px;
        margin-top: -1px;
        padding-top: 2px;
        border: 1px solid #ababab;
        border-width: 0 1px 2px;
        border-bottom-color: #217346;
        background: #fff;
        font-weight: bold;
        color: #217346;
      }
      .add { height: 25px; margin-left: 32px; }
      .scroll { display: flex; align-items: center; margin: 6px 21px 0 auto; }
      .scroll button { width: 15px; height: 15px; border: 1px solid #ababab; background: #fff; }
      .thumb { width: 676px; height: 15px; margin: 0 25px 0 -1px; border: 1px solid #ababab; border-left-width: 2px; background: #fff; }
      .grip { margin-right: 15px; }
    `;
  }

  _getTemplate() {
    return `
      <div class="nav">
        <button aria-label="Previous sheet">${icon('leftOff')}</button>
        <button aria-label="Next sheet">${icon('rightOff')}</button>
      </div>
      <button class="tab">Grid</button>
      <button class="tab active">Sheet1</button>
      <button class="add" aria-label="New sheet">${icon('plusCircle')}</button>
      <div class="scroll">
        <svg class="grip" width="2" height="10"><path d="M1 0v10" stroke="#aaa" stroke-width="2" stroke-dasharray="2 2"/></svg>
        <button aria-label="Scroll left">${icon('left')}</button>
        <div class="thumb"></div>
        <button aria-label="Scroll right">${icon('right')}</button>
      </div>
    `;
  }
}

class StatusBar extends BaseElement {
  _getStyles() {
    return `
      :host {
        display: flex;
        align-items: center;
        height: 21px;
        padding: 0 8px 0 7px;
        background: #f1f1f1;
      }
      .views { display: flex; margin-left: auto; }
      .views button { width: 38px; height: 21px; }
      .views .active { background: #d2d2d2; }
      .zoom { display: flex; align-items: center; gap: 6px; padding: 0 12px 0 7px; }
      input { width: 96px; height: 12px; background: linear-gradient(#aaa, #aaa) center / 100% 1px no-repeat; }
      input::-webkit-slider-thumb { appearance: none; width: 4px; height: 12px; background: #666; }
    `;
  }

  _getTemplate() {
    return `
      <span>Ready</span>
      <div class="views">
        <button class="active" aria-label="Normal">${icon('viewNormal')}</button>
        <button aria-label="Page Layout">${icon('viewLayout')}</button>
        <button aria-label="Page Break Preview">${icon('viewBreak')}</button>
      </div>
      <div class="zoom">
        <svg width="8" height="8"><path d="M0 4h8" stroke="#666" stroke-width="2"/></svg>
        <input type="range" aria-label="Zoom" min="0" max="100" value="50">
        <svg width="8" height="8"><path d="M0 4h8M4 0v8" stroke="#666" stroke-width="2"/></svg>
      </div>
      <span>100%</span>
    `;
  }
}

// ============ DIALOGS ============

class WinDialog extends BaseElement {
  _getStyles() {
    return `
      :host {
        position: absolute;
        display: flex;
        flex-direction: column;
        padding: 0 6px 6px;
        border: 1px solid #4f5459;
        border-radius: 7px;
        box-shadow: inset 0 0 0 1px #fff, 1px 2px 8px rgba(0, 0, 0, .55);
        background: linear-gradient(100deg, rgba(255, 255, 255, .95) 40%, rgba(232, 248, 248, .8) 46%, rgba(250, 255, 255, .85) 60%, rgba(226, 247, 246, .6));
        backdrop-filter: blur(3px);
        font-size: 11px;
        color: #000;
      }
      :host([active]) {
        border-color: #1c2733;
        box-shadow: inset 0 0 0 1px #e8f4ff, 2px 3px 12px 3px rgba(0, 0, 0, .7);
        background: linear-gradient(100deg, #cfe3f8, #b5d3f3 30%, #c3dcf8 50%, #d2e6fc 75%, #b9d6f4);
      }
      header { display: flex; justify-content: space-between; height: 28px; padding-left: 2px; }
      h2 { margin: 6px 0 0; font: 12px/16px "Open Sans", sans-serif; }
      .controls { display: flex; height: 18px; border: 1px solid #9ba5ab; border-top: 0; border-radius: 0 0 4px 4px; }
      .controls button { width: 46px; }
      .controls .help { width: 28px; border-right: 1px solid #9ba5ab; font-weight: bold; font-size: 14px; color: #555b6d; }
      :host([active]) .controls {
        height: 19px;
        border-color: #5a1a1a;
        background: linear-gradient(#eab3a5, #dc8272 45%, #c03a24 50%, #d9694a);
        box-shadow: inset 0 0 0 1px rgba(255, 255, 255, .5);
      }
      :host([active]) .controls button { width: 45px; }
      .body { flex: 1; border: 1px solid #6d757d; background: #f0f0f0; }
    `;
  }

  _getTemplate() {
    const help = this.hasAttribute('help') ? '<button class="help">?</button>' : '';
    return `
      <header>
        <h2>${this.getAttribute('heading')}</h2>
        <div class="controls">${help}<button aria-label="Close">${icon('glassClose')}</button></div>
      </header>
      <div class="body"><slot></slot></div>
    `;
  }
}

const DIALOG_BUTTON_CSS = `
  .push {
    width: 73px;
    height: 21px;
    border: 1px solid #707070;
    border-radius: 3px;
    background: linear-gradient(#f3f3f3, #ebebeb 50%, #dddddd 50%, #cfcfcf);
    box-shadow: inset 0 0 0 1px #fcfcfc;
  }
`;

class FormulaAlert extends BaseElement {
  _getStyles() {
    return `
      :host { display: block; padding: 13px 0 5px; }
      ${DIALOG_BUTTON_CSS}
      .message { display: flex; align-items: center; gap: 16px; padding: 0 12px 0 17px; line-height: 13px; }
      p { margin: 0; white-space: pre; }
      .buttons { display: flex; justify-content: center; gap: 18px; margin-top: 11px; }
      .push { width: 66px; }
      .default { border-color: #3c7fb1; box-shadow: inset 0 0 0 2px #5fd3f7; background: linear-gradient(#eef4f7, #e3ebf0 50%, #d0dbe2 50%, #c6d2d9); }
    `;
  }

  _getTemplate() {
    return `
      <div class="message">
        ${icon('warning')}
        <p>There's a problem with this formula.

Not trying to type a formula?
When the first character is an equal (=) or minus (-) sign, Excel thinks it's a formula:

• you type:   =1+1, cell shows:   2

To get around this, type an apostrophe ( ' ) first:

• you type:   '=1+1, cell shows:   =1+1</p>
      </div>
      <div class="buttons">
        <button class="push default">OK</button>
        <button class="push">Help</button>
      </div>
    `;
  }
}

class RuleEditor extends BaseElement {
  _getStyles() {
    return `
      :host { display: block; padding: 9px 6px 7px; }
      ${DIALOG_BUTTON_CSS}
      h3 { margin: 0 1px 1px; font: inherit; line-height: 16px; }
      ul { margin: 0; padding: 2px 1px 0; border: 2px solid #6b6d74; background: #fff; list-style: none; }
      li { display: flex; align-items: center; gap: 3px; height: 18px; padding-left: 6px; border-bottom: 1px solid #efefef; }
      li[aria-selected] { background: #e0dfe4; }
      ul + h3 { margin-top: 14px; }
      .description { padding: 7px 10px 6px 8px; border: 1px solid #828790; background: #fff; }
      .description > label { display: block; padding-left: 1px; line-height: 16px; font-weight: bold; }
      .field { display: flex; height: 21px; margin-top: 5px; border: 1px solid #abadb3; }
      .field input { flex: 1; padding-left: 4px; }
      .field button { width: 21px; height: 19px; border: 1px solid #707070; border-radius: 2px; background: #e8eaf0; }
      hr { margin: 16px -8px 16px -6px; border: 0; border-top: 1px solid #e3e3e3; }
      .preview { display: flex; align-items: center; padding-left: 1px; }
      .preview b { width: 54px; }
      .sample {
        width: 200px;
        height: 40px;
        margin-right: 10px;
        padding: 2px;
        border: 1px solid #555;
        background: #fff;
      }
      .sample span {
        display: grid;
        place-items: center;
        height: 100%;
        background:
          conic-gradient(from 270deg at 1px 1px, #3a76b8 90deg, transparent 0) 0 0 / 4px 2px,
          conic-gradient(from 270deg at 1px 1px, #3a76b8 90deg, transparent 0) 2px 1px / 4px 2px,
          #000208;
        font: 13px "Liberation Sans", sans-serif;
        color: #000;
      }
      .buttons { display: flex; justify-content: flex-end; gap: 11px; margin-top: 4px; padding-right: 6px; }
    `;
  }

  _getTemplate() {
    const rules = [
      'Format all cells based on their values',
      'Format only cells that contain',
      'Format only top or bottom ranked values',
      'Format only values that are above or below average',
      'Format only unique or duplicate values',
      'Use a formula to determine which cells to format'
    ];
    return `
      <h3 id="types"><u>S</u>elect a Rule Type:</h3>
      <ul role="listbox" aria-labelledby="types">
        ${rules.map((rule, i) => `<li role="option" ${i === 5 ? 'aria-selected="true"' : ''}>${icon('bullet')}${rule}</li>`).join('')}
      </ul>
      <h3><u>E</u>dit the Rule Description:</h3>
      <div class="description">
        <label for="formula">F<u>o</u>rmat values where this formula is true:</label>
        <div class="field">
          <input id="formula" value='=AND($G$1="mmm";$H$1&gt;300;$H$1&lt;370)'>
          <button aria-label="Collapse Dialog">${icon('rangePick')}</button>
        </div>
        <hr>
        <div class="preview">
          <b>Preview:</b>
          <div class="sample"><span>AaBbCcYyZz</span></div>
          <button class="push"><span><u>F</u>ormat...</span></button>
        </div>
      </div>
      <div class="buttons">
        <button class="push">OK</button>
        <button class="push">Cancel</button>
      </div>
    `;
  }
}

// ============ TASKBAR ============

class TaskButton extends BaseElement {
  _getStyles() {
    return `
      :host { display: block; width: 159px; height: 39px; }
      button {
        justify-content: flex-start;
        gap: 5px;
        width: 100%;
        height: 100%;
        padding-left: 9px;
        border: 1px solid rgba(190, 220, 240, .75);
        border-radius: 3px;
        box-shadow: 0 0 0 1px rgba(5, 25, 50, .7);
        background: linear-gradient(170deg, rgba(255, 255, 255, .55), rgba(255, 255, 255, .15) 48%, rgba(255, 255, 255, .04) 52%);
        white-space: pre;
        color: #fff;
        text-shadow: 0 0 2px rgba(0, 20, 50, .6);
      }
      :host([active]) button { background: linear-gradient(170deg, rgba(255, 255, 255, .8), rgba(255, 255, 255, .45) 48%, rgba(255, 255, 255, .35) 52%); }
    `;
  }

  _getTemplate() {
    return `<button>${icon(this.getAttribute('icon'))}<slot></slot></button>`;
  }
}

class WinTaskbar extends BaseElement {
  _getStyles() {
    return `
      :host {
        display: flex;
        height: 40px;
        border-top: 1px solid #0a1c30;
        background:
          linear-gradient(rgba(255, 255, 255, .35), transparent 2px),
          linear-gradient(125deg, transparent 60px, rgba(170, 210, 230, .25) 90px, transparent 130px, transparent 170px, rgba(170, 210, 150, .25) 190px, transparent 220px),
          linear-gradient(90deg, #1c6396, #277aa9 16%, #3a7fa8 30%, #2f70a3 50%, #235f9b 65%, #174b85 78%, #164780 88%, #0f3460);
      }
      .start { width: 54px; }
      .calc { width: 68px; }
      .media { width: 56px; }
      .outlook { width: 68px; }
      .laptop { width: 66px; }
      .firefox { width: 61px; }
      .gap { margin-left: 3px; }
      .tray { display: flex; align-items: center; gap: 9px; margin-left: auto; color: #fff; }
      .tray button { height: 30px; }
      .lang { margin-right: 8px; padding-bottom: 4px; }
      .clock { width: 66px; margin-left: 5px; line-height: 17px; text-align: center; }
      .tray .peek {
        width: 14px;
        height: 39px;
        border: 1px solid #6d8db0;
        background: linear-gradient(160deg, rgba(255, 255, 255, .4), transparent 50%);
      }
    `;
  }

  _getTemplate() {
    return `
      <button class="start" aria-label="Start">${icon('orb')}</button>
      <button class="calc" aria-label="Calculator">${icon('calc')}</button>
      <button class="media" aria-label="Media Player">${icon('media')}</button>
      <button class="outlook" aria-label="Outlook">${icon('outlook')}</button>
      <task-button icon="chrome">Microsoft Excel -...</task-button>
      <button class="laptop" aria-label="Utility">${icon('laptop')}</button>
      <button class="firefox" aria-label="Firefox">${icon('firefox')}</button>
      <task-button active icon="excel">report.xls  [Comp...</task-button>
      <task-button icon="excel">ზომები saert.xls  [...</task-button>
      <task-button icon="folder" class="gap">doantvirtuli</task-button>
      <task-button icon="folder">Screenshots</task-button>
      <task-button icon="skype" class="gap">Skype</task-button>
      <task-button icon="word" class="gap">excel-tavi3.docx (...</task-button>
      <div class="tray">
        <span class="lang">EN</span>
        <button aria-label="Show hidden icons">${icon('trayUp')}</button>
        <button aria-label="Dropbox">${icon('dropboxTray')}</button>
        <button aria-label="Network">${icon('network')}</button>
        <button aria-label="Volume">${icon('speaker')}</button>
        <div class="clock">14:32<br>09/17/2016</div>
        <button class="peek" aria-label="Show desktop"></button>
      </div>
    `;
  }
}

class TrayBalloon extends BaseElement {
  _getStyles() {
    return `
      :host {
        position: absolute;
        right: 143px;
        bottom: 39px;
        width: 264px;
        height: 54px;
        padding: 8px 13px 0 10px;
        border: 1px solid #333;
        border-radius: 9px;
        background: linear-gradient(rgba(255, 255, 255, .82), rgba(233, 236, 246, .88));
        box-shadow: 2px 2px 4px rgba(0, 0, 0, .4);
      }
      header { display: flex; align-items: center; gap: 6px; height: 22px; }
      h2 { flex: 1; margin: 0; font: 15px/22px "Open Sans", sans-serif; color: #3b68c0; }
      header button { align-self: flex-start; height: 14px; }
      header button + button { margin-left: 3px; }
      p { margin: 0 0 0 22px; font-size: 11px; color: #333; white-space: nowrap; }
      .tail { position: absolute; right: 14px; top: 52px; }
    `;
  }

  _getTemplate() {
    return `
      <header>
        ${icon('dropbox')}
        <h2>Screenshot Added</h2>
        <button aria-label="Options">${icon('wrench')}</button>
        <button aria-label="Dismiss">${icon('balloonClose')}</button>
      </header>
      <p>A screenshot was added to your Dropbox.</p>
      <svg class="tail" width="18" height="17"><path d="M0 0l17 16V0" fill="#bcc6da"/><path d="M0 0l17 16" stroke="#333"/></svg>
    `;
  }
}

// ============ DESKTOP ============

class DesktopShell extends BaseElement {
  _getStyles() {
    return `
      :host { display: flex; flex-direction: column; position: relative; height: 100vh; overflow: hidden; }
      .alert { left: 823px; top: 297px; width: 519px; height: 218px; }
      .rule { left: 480px; top: 345px; width: 387px; height: 372px; }
    `;
  }

  _getTemplate() {
    return `
      <excel-title-bar></excel-title-bar>
      <excel-tabs></excel-tabs>
      <excel-ribbon></excel-ribbon>
      <formula-bar></formula-bar>
      <sheet-grid></sheet-grid>
      <sheet-tabs></sheet-tabs>
      <status-bar></status-bar>
      <win-taskbar></win-taskbar>
      <win-dialog class="alert" heading="Microsoft Excel" active><formula-alert></formula-alert></win-dialog>
      <win-dialog class="rule" heading="New Formatting Rule" help><rule-editor></rule-editor></win-dialog>
      <tray-balloon></tray-balloon>
    `;
  }
}

// ============ REGISTRATION ============

Object.entries({
  'ui-icon': UiIcon,
  'excel-title-bar': ExcelTitleBar,
  'excel-tabs': ExcelTabs,
  'ribbon-group': RibbonGroup,
  'excel-ribbon': ExcelRibbon,
  'formula-bar': FormulaBar,
  'sheet-grid': SheetGrid,
  'sheet-tabs': SheetTabs,
  'status-bar': StatusBar,
  'win-dialog': WinDialog,
  'formula-alert': FormulaAlert,
  'rule-editor': RuleEditor,
  'task-button': TaskButton,
  'win-taskbar': WinTaskbar,
  'tray-balloon': TrayBalloon,
  'desktop-shell': DesktopShell
}).forEach(([name, ctor]) => {
  if (!customElements.get(name)) customElements.define(name, ctor);
});
</script>
</body>
</html>
